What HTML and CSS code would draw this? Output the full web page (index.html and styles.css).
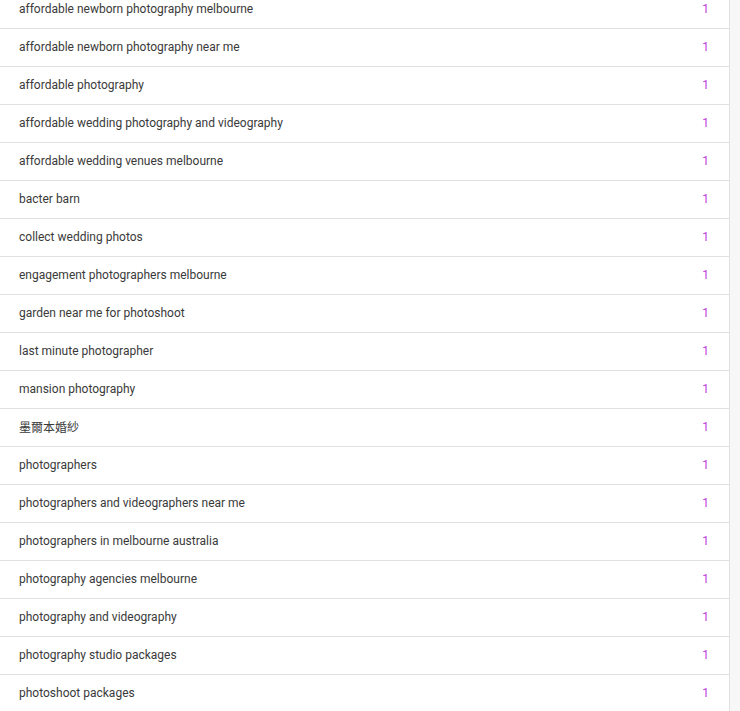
FILE: index.html
```html
<!DOCTYPE html>
<html>
<head>
<meta charset="utf-8">
<link rel="stylesheet" href="styles.css">
</head>
<body>
<div class="page">
  <div class="table">
    <div class="row"><span class="kw">affordable newborn photography melbourne</span><span class="num">1</span></div>
    <div class="row"><span class="kw">affordable newborn photography near me</span><span class="num">1</span></div>
    <div class="row"><span class="kw">affordable photography</span><span class="num">1</span></div>
    <div class="row"><span class="kw">affordable wedding photography and videography</span><span class="num">1</span></div>
    <div class="row"><span class="kw">affordable wedding venues melbourne</span><span class="num">1</span></div>
    <div class="row"><span class="kw">bacter barn</span><span class="num">1</span></div>
    <div class="row"><span class="kw">collect wedding photos</span><span class="num">1</span></div>
    <div class="row"><span class="kw">engagement photographers melbourne</span><span class="num">1</span></div>
    <div class="row"><span class="kw">garden near me for photoshoot</span><span class="num">1</span></div>
    <div class="row"><span class="kw">last minute photographer</span><span class="num">1</span></div>
    <div class="row"><span class="kw">mansion photography</span><span class="num">1</span></div>
    <div class="row"><span class="kw">墨爾本婚紗</span><span class="num">1</span></div>
    <div class="row"><span class="kw">photographers</span><span class="num">1</span></div>
    <div class="row"><span class="kw">photographers and videographers near me</span><span class="num">1</span></div>
    <div class="row"><span class="kw">photographers in melbourne australia</span><span class="num">1</span></div>
    <div class="row"><span class="kw">photography agencies melbourne</span><span class="num">1</span></div>
    <div class="row"><span class="kw">photography and videography</span><span class="num">1</span></div>
    <div class="row"><span class="kw">photography studio packages</span><span class="num">1</span></div>
    <div class="row"><span class="kw">photoshoot packages</span><span class="num">1</span></div>
  </div>
  <div class="side"></div>
</div>
</body>
</html>
```
FILE: styles.css
```css
html, body {
  margin: 0;
  padding: 0;
  background: #ffffff;
  overflow: hidden;
}
.page {
  display: flex;
  height: 711px;
  font-family: Roboto, "Noto Sans CJK TC", sans-serif;
  font-size: 12px;
  color: #3a3a3a;
}
.table {
  width: 729px;
  margin-top: -9px;
  border-right: 1px solid #e0e0e0;
  flex: none;
}
.side {
  flex: 1;
  background: #f7f7f7;
}
.row {
  display: flex;
  align-items: center;
  justify-content: space-between;
  padding: 0 20px 2px 19px;
  box-sizing: border-box;
  height: 38px;
  border-bottom: 1px solid #e0e0e0;
}
.num {
  color: #c03cdc;
}
```
